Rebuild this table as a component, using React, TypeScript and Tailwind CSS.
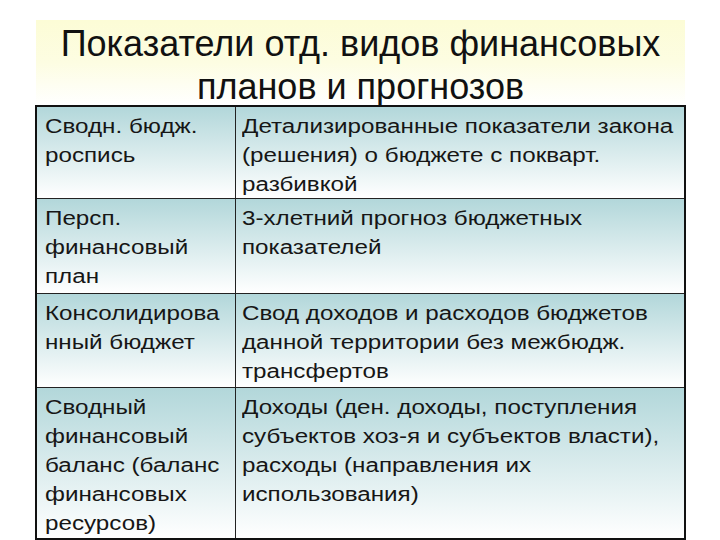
import React from "react";

const rows: [string[], string[]][] = [
  [["Сводн. бюдж.", "роспись"], ["Детализированные показатели закона", "(решения) о бюджете с покварт.", "разбивкой"]],
  [["Персп.", "финансовый", "план"], ["3-хлетний прогноз бюджетных", "показателей"]],
  [["Консолидирова", "нный бюджет"], ["Свод доходов и расходов бюджетов", "данной территории без межбюдж.", "трансфертов"]],
  [["Сводный", "финансовый", "баланс (баланс", "финансовых", "ресурсов)"], ["Доходы (ден. доходы, поступления", "субъектов хоз-я и субъектов власти),", "расходы (направления их", "использования)"]],
];

const heights = ["h-[91px]", "h-[95px]", "h-[94px]", "h-[151px]"];

export default function App() {
  return (
    <div className="w-[720px] h-[540px] bg-white overflow-hidden" style={{ fontFamily: '"Liberation Sans", Arial, sans-serif' }}>
      <div className="ml-[36px] mt-[20px] w-[649px] h-[85px] bg-gradient-to-b from-[#fcfcd6] via-[#fdfde2] to-white flex flex-col items-center pt-[2px] text-[36px] leading-[43px] text-[#111]">
        <div>Показатели отд. видов финансовых</div>
        <div>планов и прогнозов</div>
      </div>
      <div className="ml-[35px] w-[651px] border-2 border-[#111] grid grid-cols-[199px_1fr] text-[20px] leading-[29px] text-[#161616]">
        {rows.map(([a, b], i) => (
          <React.Fragment key={i}>
            <div className={`${heights[i]} ${i > 0 ? "border-t border-[#222]" : ""} border-r border-[#222] bg-gradient-to-b from-[#b2d7da] to-white pl-[8px] pt-[5px] overflow-hidden`}>
              {a.map((l, j) => <div key={j} className="origin-left scale-x-[1.21] whitespace-nowrap">{l}</div>)}
            </div>
            <div className={`${heights[i]} ${i > 0 ? "border-t border-[#222]" : ""} bg-gradient-to-b from-[#b2d7da] to-white pl-[6px] pt-[5px] overflow-hidden`}>
              {b.map((l, j) => <div key={j} className="origin-left scale-x-[1.21] whitespace-nowrap">{l}</div>)}
            </div>
          </React.Fragment>
        ))}
      </div>
    </div>
  );
}
